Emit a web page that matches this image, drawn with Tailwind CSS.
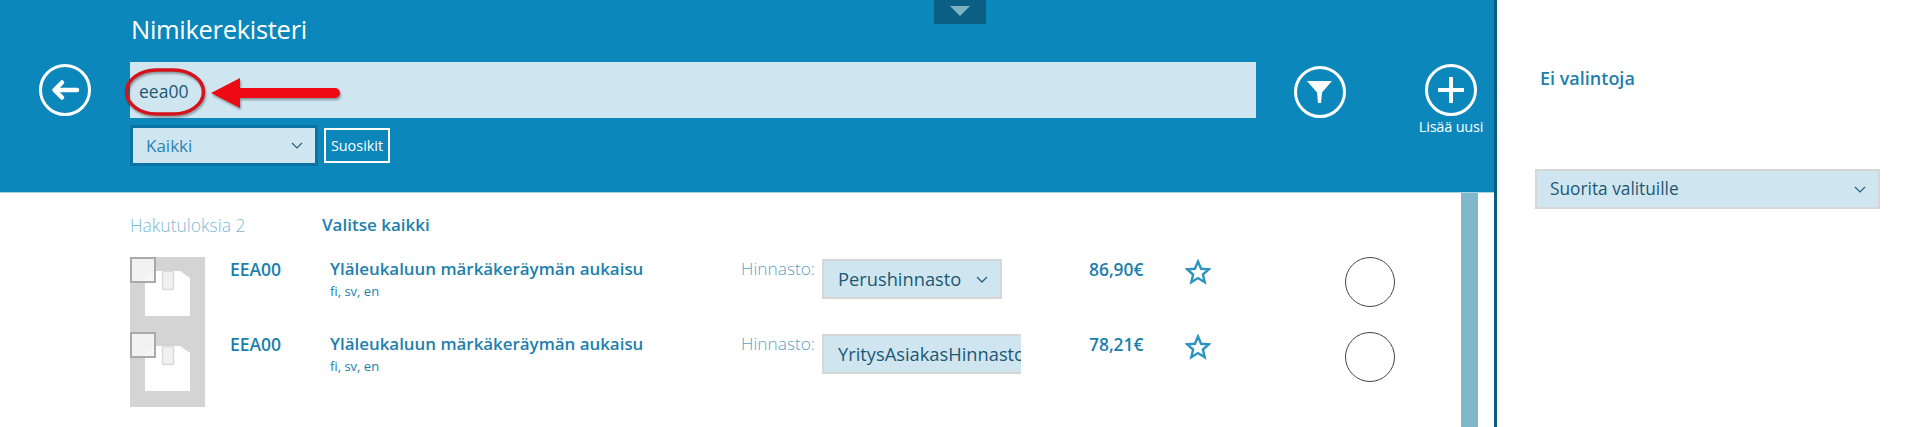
<!DOCTYPE html>
<html lang="fi">

<head>
    <meta charset="UTF-8">
    <title>Nimikerekisteri</title>
    <script src="https://cdn.jsdelivr.net/npm/@tailwindcss/browser@4"></script>
</head>

<body class="bg-white font-['Open_Sans',sans-serif] overflow-hidden">
    <div class="flex w-[1920px] h-[427px] overflow-hidden">
        <!-- main -->
        <div class="relative w-[1494px] shrink-0 flex flex-col">
            <header class="flex h-[193px] bg-[#0b87bc] border-b border-[#a6d3e6] text-white">
                <div class="w-[130px] shrink-0 flex justify-center pt-[64px]">
                    <div class="w-[52px] h-[52px] rounded-full border-[3px] border-white flex items-center justify-center">
                        <svg width="32" height="24" viewBox="0 0 32 24" fill="none" stroke="white" stroke-width="4.500" stroke-linejoin="round" stroke-linecap="round"><path d="M28 12H6M13 4.500 5.500 12l7.500 7.500"/></svg>
                    </div>
                </div>
                <div class="w-[1126px] shrink-0">
                    <h1 class="h-[62px] pt-[13px] pl-[1px] text-[25.5px] leading-[32px] tracking-[-0.3px]">Nimikerekisteri</h1>
                    <div class="h-[56px] bg-[#cfe6f1] pl-[9px] pt-[15px] text-[17.5px] leading-[28px] text-[#1d5873]">eea00</div>
                    <div class="flex mt-[7px] items-start">
                        <div class="w-[188px] h-[41px] border-[3px] border-[#0a73a3] bg-[#cfe6f1] flex items-center justify-between pl-[13px] pr-[12px] text-[17px] text-[#2a83ae]">
                            <span>Kaikki</span>
                            <svg width="12" height="7" viewBox="0 0 12 7" fill="none" stroke="#27607c" stroke-width="1.200"><path d="M1 1l5 5 5-5"/></svg>
                        </div>
                        <div class="ml-[6px] mt-[3px] w-[66px] h-[35px] border-2 border-white flex items-center justify-center text-[14.400px]">Suosikit</div>
                    </div>
                </div>
                <div class="w-[127px] shrink-0 flex justify-center pt-[66px]">
                    <div class="w-[52px] h-[52px] rounded-full border-[3px] border-white flex items-center justify-center">
                        <svg width="25" height="22" viewBox="0 0 25 22" fill="white"><path d="M0 0h25L15 11.500 14 22h-3L10 11.500z"/></svg>
                    </div>
                </div>
                <div class="w-[52px] ml-[42px] shrink-0 flex flex-col items-center pt-[64px]">
                    <div class="w-[52px] h-[52px] shrink-0 rounded-full border-[3px] border-white flex items-center justify-center">
                        <svg width="26" height="26" viewBox="0 0 26 26" fill="none" stroke="white" stroke-width="4"><path d="M13 0v26M0 13h26"/></svg>
                    </div>
                    <span class="mt-[2px] text-[14.500px] leading-[18px] whitespace-nowrap tracking-[-0.2px]">Lisää uusi</span>
                </div>
            </header>

            <div class="flex flex-1 min-h-0">
                <div class="w-[1461px] shrink-0">
                    <div class="h-[64px] flex pl-[130px] pt-[22px] leading-[20px]">
                        <span class="w-[192px] text-[17.500px] font-light text-[#7db8d6]">Hakutuloksia 2</span>
                        <span class="text-[17px] font-semibold text-[#1d7fad]">Valitse kaikki</span>
                    </div>

                    <div class="h-[75px] flex pl-[130px] text-[#1d7fad]">
                        <div class="relative w-[75px] h-[75px] shrink-0 bg-[#d4d4d4]">
                            <svg class="absolute left-0 top-0" width="75" height="75" viewBox="0 0 75 75"><path d="M15 21l10-7h25l10 7v38H15z" fill="white"/><rect x="32.500" y="14.500" width="11" height="18" rx="1.500" fill="#f1f1f1" stroke="#dadada" stroke-width="1.500"/></svg>
                            <div class="absolute left-0 top-0 w-[26px] h-[26px] bg-[#f5f5f5]/90 border-[2px] border-[#a9a9a9]"></div>
                        </div>
                        <div class="w-[100px] ml-[25px] shrink-0 pt-[2px] text-[17.500px] leading-[20px] font-semibold">EEA00</div>
                        <div class="w-[411px] shrink-0 pt-[2px]">
                            <div class="text-[16.900px] leading-[20px] font-semibold">Yläleukaluun märkäkeräymän aukaisu</div>
                            <div class="text-[13px] leading-[16px] mt-[4px]">fi, sv, en</div>
                        </div>
                        <div class="w-[81px] shrink-0 pt-[2px] text-[17.300px] leading-[20px] font-light text-[#5f9fc6]">Hinnasto:</div>
                        <div class="w-[267px] shrink-0 pt-[2px]">
                            <div class="w-[180px] h-[40px] border-2 border-[#d6d6d6] bg-[#cfe6f1] flex items-center justify-between pl-[14px] pr-[12px] text-[18.300px] text-[#1d5873]">
                                <span>Perushinnasto</span>
                                <svg class="shrink-0" width="12" height="7" viewBox="0 0 12 7" fill="none" stroke="#27607c" stroke-width="1.300"><path d="M1 1l5 5 5-5"/></svg>
                            </div>
                        </div>
                        <div class="w-[96px] shrink-0 pt-[2px] text-[17.400px] leading-[20px] font-semibold">86,90€</div>
                        <div class="w-[160px] shrink-0 pt-[2px]">
                            <svg width="26" height="26" viewBox="0 0 26 26" fill="none" stroke="#2b93bf" stroke-width="2.400" stroke-linejoin="miter"><path d="M13 2.500l3.100 7.300 7.700.6-5.900 5.100 1.800 7.700L13 19.100l-6.700 4.100 1.800-7.700-5.900-5.100 7.700-.6z"/></svg>
                        </div>
                        <div class="w-[50px] h-[50px] shrink-0 rounded-full border border-[#444]"></div>
                    </div>

                    <div class="h-[75px] flex pl-[130px] text-[#1d7fad]">
                        <div class="relative w-[75px] h-[75px] shrink-0 bg-[#d4d4d4]">
                            <svg class="absolute left-0 top-0" width="75" height="75" viewBox="0 0 75 75"><path d="M15 21l10-7h25l10 7v38H15z" fill="white"/><rect x="32.500" y="14.500" width="11" height="18" rx="1.500" fill="#f1f1f1" stroke="#dadada" stroke-width="1.500"/></svg>
                            <div class="absolute left-0 top-0 w-[26px] h-[26px] bg-[#f5f5f5]/90 border-[2px] border-[#a9a9a9]"></div>
                        </div>
                        <div class="w-[100px] ml-[25px] shrink-0 pt-[2px] text-[17.500px] leading-[20px] font-semibold">EEA00</div>
                        <div class="w-[411px] shrink-0 pt-[2px]">
                            <div class="text-[16.900px] leading-[20px] font-semibold">Yläleukaluun märkäkeräymän aukaisu</div>
                            <div class="text-[13px] leading-[16px] mt-[4px]">fi, sv, en</div>
                        </div>
                        <div class="w-[81px] shrink-0 pt-[2px] text-[17.300px] leading-[20px] font-light text-[#5f9fc6]">Hinnasto:</div>
                        <div class="w-[267px] shrink-0 pt-[2px]">
                            <div class="w-[199px] h-[40px] border-2 border-r-0 border-[#d6d6d6] bg-[#cfe6f1] flex items-center pl-[14px] text-[18.300px] text-[#1d5873] overflow-hidden whitespace-nowrap">YritysAsiakasHinnasto</div>
                        </div>
                        <div class="w-[96px] shrink-0 pt-[2px] text-[17.400px] leading-[20px] font-semibold">78,21€</div>
                        <div class="w-[160px] shrink-0 pt-[2px]">
                            <svg width="26" height="26" viewBox="0 0 26 26" fill="none" stroke="#2b93bf" stroke-width="2.400" stroke-linejoin="miter"><path d="M13 2.500l3.100 7.300 7.700.6-5.900 5.100 1.800 7.700L13 19.100l-6.700 4.100 1.800-7.700-5.900-5.100 7.700-.6z"/></svg>
                        </div>
                        <div class="w-[50px] h-[50px] shrink-0 rounded-full border border-[#444]"></div>
                    </div>
                </div>
                <div class="w-[17px] shrink-0 bg-[#80b7ca]"></div>
            </div>

            <!-- top pull tab -->
            <div class="absolute left-[934px] top-0 w-[52px] h-[24px] bg-[#0c5f85] flex items-start justify-center pt-[6px]">
                <svg width="20" height="10" viewBox="0 0 20 10" fill="#7fb3bf"><path d="M0 0h20L10 10z"/></svg>
            </div>

            <!-- annotation over the search field -->
            <svg class="absolute left-[120px] top-[62px] drop-shadow-[1px_2px_1px_rgba(0,0,0,0.35)]" width="230" height="60" viewBox="0 0 230 60" fill="none">
                <rect x="6.500" y="8" width="77" height="44" rx="30" ry="22" stroke="#d4141c" stroke-width="3.500"/>
                <path d="M91 31l29-15v10h95a5 5 0 0 1 0 10h-95v10z" fill="#ee0a12"/>
            </svg>
        </div>

        <div class="w-[3px] shrink-0 bg-[#0d5c7e]"></div>

        <!-- selection panel -->
        <aside class="flex-1 pl-[38px] pr-[39px]">
            <h2 class="pt-[64px] pl-[5px] text-[18px] leading-[28px] font-semibold text-[#1d7fad]">Ei valintoja</h2>
            <div class="mt-[77px] h-[40px] w-[345px] border-2 border-[#d6d6d6] bg-[#cfe6f1] flex items-center justify-between pl-[13px] pr-[12px] text-[17.300px] text-[#1d5873]">
                <span>Suorita valituille</span>
                <svg width="12" height="7" viewBox="0 0 12 7" fill="none" stroke="#27607c" stroke-width="1.200"><path d="M1 1l5 5 5-5"/></svg>
            </div>
        </aside>
    </div>
</body>
</html>
